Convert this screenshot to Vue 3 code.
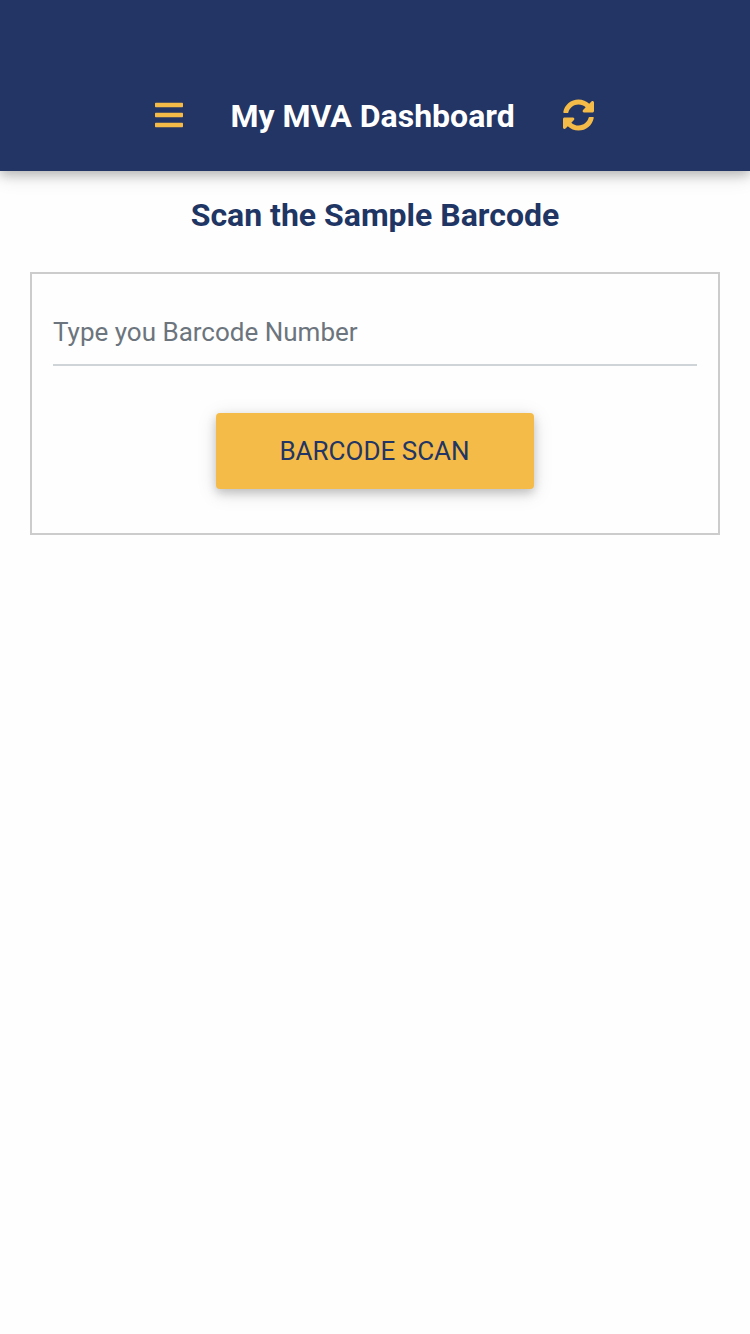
<script setup>
import { ref } from 'vue'
const barcode = ref('')
</script>

<template>
  <div class="screen">
    <header class="bar">
      <svg class="menu" viewBox="0 0 448 512"><path d="M16 132h416c8.837 0 16-7.163 16-16V76c0-8.837-7.163-16-16-16H16C7.163 60 0 67.163 0 76v40c0 8.837 7.163 16 16 16zm0 160h416c8.837 0 16-7.163 16-16v-40c0-8.837-7.163-16-16-16H16c-8.837 0-16 7.163-16 16v40c0 8.837 7.163 16 16 16zm0 160h416c8.837 0 16-7.163 16-16v-40c0-8.837-7.163-16-16-16H16c-8.837 0-16 7.163-16 16v40c0 8.837 7.163 16 16 16z" /></svg>
      <h1>My MVA Dashboard</h1>
      <svg class="sync" viewBox="8 0 512 512"><path d="M370.72 133.28C339.458 104.008 298.888 87.962 255.848 88c-77.458.068-144.328 53.178-162.791 126.85-1.344 5.363-6.122 9.15-11.651 9.15H24.103c-7.498 0-13.194-6.807-11.807-14.176C33.933 94.924 134.813 8 256 8c66.448 0 126.791 26.136 171.315 68.685L463.03 40.97C478.149 25.851 504 36.559 504 57.941V192c0 13.255-10.745 24-24 24H345.941c-21.382 0-32.09-25.851-16.971-40.971l41.75-41.749zM32 296h134.059c21.382 0 32.09 25.851 16.971 40.971l-41.75 41.75c31.262 29.273 71.835 45.319 114.876 45.28 77.418-.07 144.315-53.144 162.787-126.849 1.344-5.363 6.122-9.15 11.651-9.15h57.304c7.498 0 13.194 6.807 11.807 14.176C478.067 417.076 377.187 504 256 504c-66.448 0-126.791-26.136-171.315-68.685L48.97 471.03C33.851 486.149 8 475.441 8 454.059V320c0-13.255 10.745-24 24-24z" /></svg>
    </header>
    <main>
      <h2>Scan the Sample Barcode</h2>
      <section class="card">
        <input v-model="barcode" placeholder="Type you Barcode Number" />
        <button>BARCODE SCAN</button>
      </section>
    </main>
  </div>
</template>

<style>
body { margin: 0; background: #fefefe; }
</style>
<style scoped>
.screen { min-height: 1334px; background: #fefefe; font-family: Roboto, sans-serif; }
.bar {
  height: 171px; box-sizing: border-box; padding: 59px 0 0 155px;
  display: flex; align-items: center; background: #223564; fill: #f5bb48;
  box-shadow: 0 4px 10px rgba(0, 0, 0, .2), 0 4px 20px rgba(0, 0, 0, .14);
}
.menu { width: 28px; height: 32px; }
.sync { width: 32px; height: 32px; margin-left: 48px; }
h1 { margin: 0 0 0 47.5px; padding-top: 1px; font-size: 32px; line-height: 48px; font-weight: 700; color: #fff; white-space: nowrap; }
h2 { margin: 0; padding-top: 20px; text-align: center; font-size: 32px; line-height: 48px; font-weight: 700; color: #1f3664; }
.card {
  margin: 33px 30px 0; height: 263px; box-sizing: border-box; padding: 26px 21px 0;
  border: 2px solid #ccc; display: flex; flex-direction: column; align-items: center;
}
input {
  width: 100%; height: 66px; box-sizing: border-box; padding: 0; border: 0;
  border-bottom: 2px solid #ced4d8; background: transparent; outline: 0; border-radius: 0;
  font: 400 26px Roboto, sans-serif; color: #495057;
}
input::placeholder { color: #6c757d; opacity: 1; }
button {
  width: 318px; height: 76px; margin-top: 47px; padding: 0 1px 0 0; border: 0; border-radius: 4px;
  background: #f5bb48; color: #223564; font: 400 26px Roboto, sans-serif;
  box-shadow: 0 4px 10px rgba(0, 0, 0, .18), 0 4px 20px rgba(0, 0, 0, .13);
}
</style>
